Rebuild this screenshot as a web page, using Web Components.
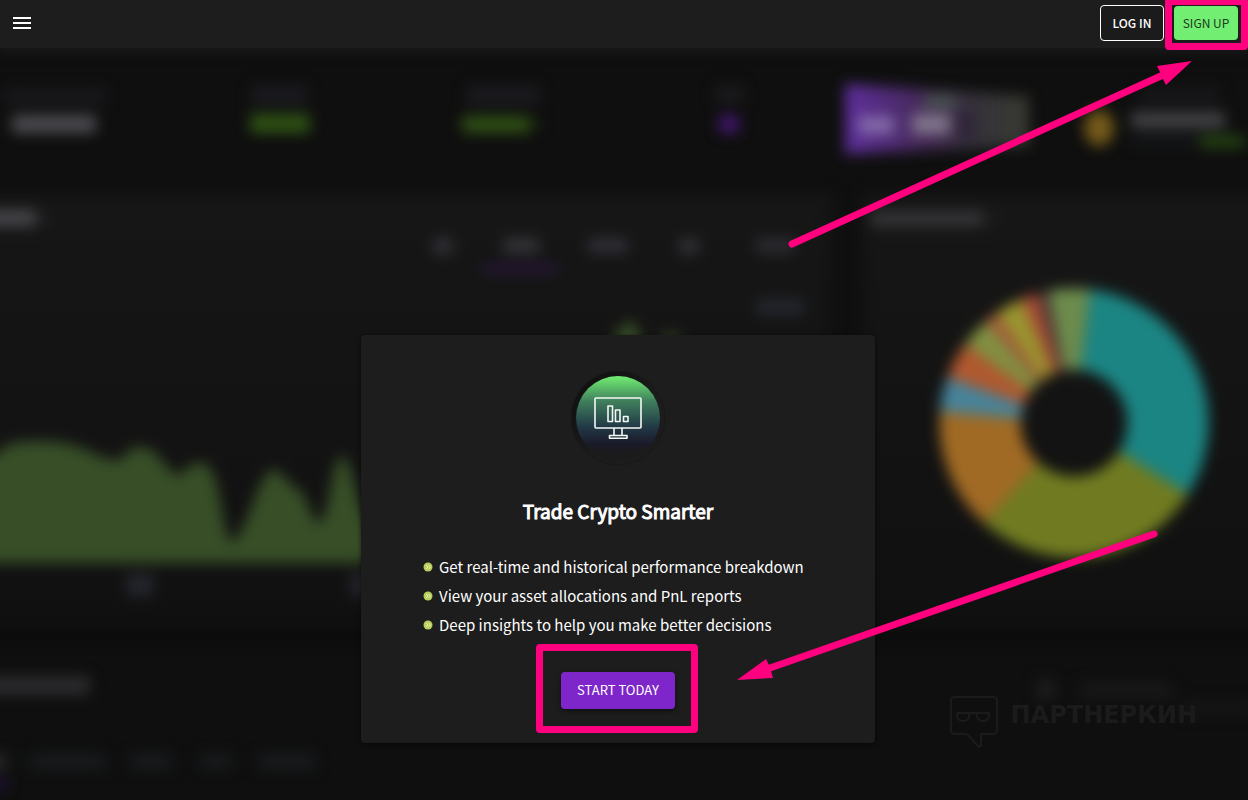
<!DOCTYPE html>
<html lang="en">
<head>
<meta charset="utf-8">
<meta name="viewport" content="width=device-width, initial-scale=1">
<title>Trade Crypto Smarter</title>
<style>
  body {
    margin: 0;
    background: #0f0f0f;
    color: #fff;
    font-family: "Noto Sans CJK SC", "Open Sans", sans-serif;
  }
</style>
</head>
<body>
<crypto-page>
  <app-header slot="header">
    <app-button variant="outline">LOG IN</app-button>
    <highlight-frame class="tight"><app-button variant="green">SIGN UP</app-button></highlight-frame>
  </app-header>
  <promo-card heading="Trade Crypto Smarter">
    <promo-item>Get real-time and historical performance breakdown</promo-item>
    <promo-item>View your asset allocations and PnL reports</promo-item>
    <promo-item>Deep insights to help you make better decisions</promo-item>
    <highlight-frame slot="action"><app-button variant="purple">START TODAY</app-button></highlight-frame>
  </promo-card>
</crypto-page>

<script>
// Page shell: blurred dashboard behind, header, content, annotations on top
class CryptoPage extends HTMLElement {
  constructor() {
    super();
    this.attachShadow({ mode: 'open' });
  }

  connectedCallback() {
    this.shadowRoot.innerHTML = `
      <style>
        :host {
          display: flex;
          flex-direction: column;
          position: relative;
          min-height: 100vh;
          overflow: hidden;
        }
        main {
          flex: 1;
          display: flex;
          justify-content: center;
          align-items: flex-start;
          padding: 287px 12px 57px 0;
          position: relative;
        }
      </style>
      <dashboard-backdrop></dashboard-backdrop>
      <slot name="header"></slot>
      <main><slot></slot></main>
      <site-watermark></site-watermark>
      <arrow-layer></arrow-layer>
    `;
  }
}

// Header
class AppHeader extends HTMLElement {
  constructor() {
    super();
    this.attachShadow({ mode: 'open' });
  }

  connectedCallback() {
    this.shadowRoot.innerHTML = `
      <style>
        :host {
          display: block;
          position: relative;
          z-index: 1;
        }
        header {
          display: flex;
          align-items: center;
          justify-content: space-between;
          height: 48px;
          padding: 0 10px;
          box-sizing: border-box;
          background: #1d1d1d;
          box-shadow: 0 4px 10px #1b1b1b;
        }
        .menu {
          display: flex;
          padding: 0 0 2px;
          border: 0;
          background: none;
        }
        nav {
          display: flex;
          align-items: center;
          gap: 10px;
          padding-bottom: 2px;
        }
      </style>
      <header>
        <button class="menu" aria-label="Menu">
          <svg width="24" height="24" viewBox="0 0 24 24" fill="#fff"><path d="M3 18h18v-2H3v2zm0-5h18v-2H3v2zm0-7v2h18V6H3z"/></svg>
        </button>
        <nav><slot></slot></nav>
      </header>
    `;
  }
}

// Button
class AppButton extends HTMLElement {
  constructor() {
    super();
    this.attachShadow({ mode: 'open' });
  }

  connectedCallback() {
    const variant = this.getAttribute('variant');
    this.shadowRoot.innerHTML = `
      <style>
        :host {
          display: block;
        }
        button {
          display: block;
          min-width: 64px;
          padding: 8px;
          border: 0;
          border-radius: 4px;
          font: 12px/18px "Noto Sans CJK SC", "Open Sans", sans-serif;
          white-space: nowrap;
          cursor: pointer;
        }
        .outline {
          border: 1px solid #fff;
          background: #1b1b1b;
          color: #fff;
          font-weight: 500;
        }
        .green {
          background: #72ef72;
          color: #1d3a1d;
        }
        .purple {
          min-width: 114px;
          padding: 9px 16px 10px;
          background: #7e26c9;
          color: #fff;
          font-size: 13px;
          box-shadow: 0 2px 5px rgba(0, 0, 0, .5);
        }
      </style>
      <button class="${variant}"><slot></slot></button>
    `;
  }
}

// Pink frame around whatever is slotted in
class HighlightFrame extends HTMLElement {
  constructor() {
    super();
    this.attachShadow({ mode: 'open' });
  }

  connectedCallback() {
    this.shadowRoot.innerHTML = `
      <style>
        :host {
          display: block;
          position: relative;
        }
        :host::after {
          content: "";
          position: absolute;
          inset: -28px -23px -24px -25px;
          border: 7px solid #ff007f;
          border-radius: 4px;
          pointer-events: none;
        }
        :host(.tight)::after {
          inset: -8px -10px -10px -9px;
        }
      </style>
      <slot></slot>
    `;
  }
}

// Promo card
class PromoCard extends HTMLElement {
  constructor() {
    super();
    this.attachShadow({ mode: 'open' });
  }

  connectedCallback() {
    this.shadowRoot.innerHTML = `
      <style>
        :host {
          display: flex;
          flex-direction: column;
          align-items: center;
          width: 514px;
          max-width: 100%;
          padding: 35px 62px 34px;
          box-sizing: border-box;
          border-radius: 4px;
          background: #1d1d1d;
          box-shadow: 0 1px 5px rgba(0, 0, 0, .6);
        }
        h2 {
          margin: 30px 0 26px;
          font-size: 19px;
          line-height: 30px;
          font-weight: 400;
          -webkit-text-stroke: 1px #fff;
        }
        ul {
          align-self: stretch;
          margin: 0 0 33px;
          padding: 0;
          list-style: none;
        }
      </style>
      <svg width="96" height="96" viewBox="0 0 96 96" fill="none">
        <defs>
          <linearGradient id="disc" x1="0" y1="0" x2="0" y2="1">
            <stop offset="0" stop-color="#72ef72"/>
            <stop offset=".3" stop-color="#3f7f5c"/>
            <stop offset=".6" stop-color="#223a47"/>
            <stop offset=".8" stop-color="#1b1b2b"/>
            <stop offset=".9" stop-color="#1b1b1d"/>
          </linearGradient>
          <linearGradient id="ring" x1="0" y1="0" x2="1" y2="1">
            <stop offset=".1" stop-color="#101010"/>
            <stop offset=".6" stop-color="#1c1c1c"/>
          </linearGradient>
        </defs>
        <circle cx="48" cy="48" r="47" fill="url(#ring)" stroke="#181818"/>
        <circle cx="48" cy="48" r="42" fill="url(#disc)"/>
        <g stroke="#f4f8f5" stroke-width="1.6" stroke-linejoin="round">
          <rect x="25" y="28" width="46" height="30" rx="1"/>
          <path d="M38 36h4.500v15.500h-4.500zM45.500 40h4.500v11.500h-4.500zM53.500 46.500h4.500v5h-4.500zM44 58v7.500M52 58v7.500M39.500 65.500h17.500v2.800h-17.500z"/>
        </g>
      </svg>
      <h2>${this.getAttribute('heading')}</h2>
      <ul><slot></slot></ul>
      <slot name="action"></slot>
    `;
  }
}

// One row of the card's list
class PromoItem extends HTMLElement {
  constructor() {
    super();
    this.attachShadow({ mode: 'open' });
  }

  connectedCallback() {
    this.setAttribute('role', 'listitem');
    this.shadowRoot.innerHTML = `
      <style>
        :host {
          display: flex;
          align-items: center;
          gap: 6px;
          font-size: 15px;
          line-height: 29px;
        }
        svg {
          flex: none;
        }
      </style>
      <svg width="10" height="10" viewBox="0 0 10 10" fill="none">
        <circle cx="5" cy="5" r="4.500" fill="#b8cf5c"/>
        <path d="M3 3l2 2-2 2M5.500 3l2 2-2 2" stroke="#f3f9cf" stroke-width=".8"/>
      </svg>
      <span><slot></slot></span>
    `;
  }
}

// Blurred dashboard drawing
class DashboardBackdrop extends HTMLElement {
  constructor() {
    super();
    this.attachShadow({ mode: 'open' });
  }

  connectedCallback() {
    // x, y, width, height, colour of each blurred label
    const labels = [
      [4, 88, 102, 16, '#19191d'], [12, 115, 84, 18, '#4c4b50'],
      [250, 86, 58, 18, '#1b1b20'], [250, 114, 60, 19, '#2f5214'],
      [466, 86, 74, 18, '#1b1b20'], [462, 116, 68, 17, '#304f15'], [532, 120, 8, 8, '#1d3012'],
      [714, 86, 30, 16, '#1b1b1e'], [719, 115, 20, 18, '#42166c'],
      [1140, 88, 80, 14, '#18181c'], [1131, 112, 94, 16, '#434347'],
      [1132, 135, 70, 10, '#15171a'], [1200, 136, 44, 11, '#264a10'],
      [-20, 210, 56, 16, '#47474c'], [40, 214, 9, 8, '#242429'],
      [870, 211, 114, 15, '#353538'], [990, 214, 10, 8, '#1f1f22'],
      [433, 238, 20, 16, '#313137'], [503, 238, 36, 15, '#343439'],
      [588, 238, 40, 15, '#2f2f37'], [679, 238, 20, 16, '#303035'],
      [756, 238, 38, 15, '#2c2c32'], [482, 265, 76, 7, '#2c1440'],
      [756, 299, 48, 16, '#23262d'],
      [126, 574, 28, 22, '#24252c'], [350, 574, 28, 22, '#24252c'],
      [-20, 676, 110, 19, '#2b2b2e'],
      [-20, 754, 27, 15, '#29292c'], [-20, 780, 28, 8, '#271246'],
      [30, 754, 76, 15, '#181b1d'], [130, 754, 42, 15, '#181b1d'],
      [200, 754, 32, 15, '#181b1d'], [258, 754, 58, 15, '#181b1d'],
      [1036, 680, 20, 19, '#1d1d1f'], [1080, 682, 92, 17, '#181819'], [1180, 701, 80, 14, '#161616']
    ];

    // start and end angle, clockwise from the top
    const slices = [
      [7, 122, '#1b8583'], [122, 222, '#707b21'], [222, 275, '#a06a24'],
      [275, 290, '#47839a'], [290, 306, '#b0592f'], [306, 319, '#819042'],
      [319, 325, '#a65c3b'], [325, 337, '#9a962f'], [337, 344, '#a94b35'],
      [344, 349, '#4c3634'], [349, 367, '#6d8b4c']
    ];

    this.shadowRoot.innerHTML = `
      <style>
        :host {
          display: block;
          position: absolute;
          inset: 0;
        }
        svg {
          display: block;
          width: 100%;
          height: 100%;
        }
      </style>
      <svg viewBox="0 0 1248 800" preserveAspectRatio="xMidYMin slice" fill="none" aria-hidden="true">
        <defs>
          <filter id="soft" x="-10%" y="-10%" width="120%" height="120%" color-interpolation-filters="sRGB">
            <feGaussianBlur stdDeviation="7"/>
          </filter>
          <linearGradient id="panel" x1="0" y1="0" x2="0" y2="1">
            <stop offset="0" stop-color="#161616"/>
            <stop offset="1" stop-color="#101010"/>
          </linearGradient>
          <linearGradient id="banner">
            <stop offset="0" stop-color="#5e2e9c"/>
            <stop offset=".45" stop-color="#442955"/>
            <stop offset=".7" stop-color="#35323a"/>
            <stop offset="1" stop-color="#383a31"/>
          </linearGradient>
        </defs>
        <rect width="1248" height="800" fill="#0f0f0f"/>
        <g filter="url(#soft)">
          <rect x="-40" y="193" width="872" height="433" fill="url(#panel)"/>
          <rect x="862" y="193" width="430" height="433" fill="url(#panel)"/>
          <rect x="-40" y="630" width="1330" height="10" fill="#0b0b0b"/>
          <path d="M845 84l184 12v50l-184 8z" fill="url(#banner)"/>
          <rect x="858" y="116" width="36" height="18" fill="#8269a8"/>
          <rect x="912" y="114" width="38" height="20" fill="#81758d"/>
          <rect x="924" y="95" width="32" height="12" fill="#47554f"/>
          <rect x="958" y="112" width="16" height="26" fill="#2e2338"/>
          <ellipse cx="1099" cy="128" rx="15" ry="18" fill="#745a1a"/>
          ${labels.map(([x, y, w, h, fill]) => `<rect x="${x}" y="${y}" width="${w}" height="${h}" rx="3" fill="${fill}"/>`).join('')}
          <path d="M-30 470C-10 462 5 442 20 442C50 440 70 442 90 452C105 458 115 463 122 459C132 442 148 445 158 456C168 468 176 478 182 474C192 460 205 458 212 472C222 488 222 535 232 542C246 536 258 472 274 469C284 473 288 486 300 490C308 498 312 526 321 522C330 510 332 457 342 456C352 459 356 500 366 520C400 560 500 500 560 420C590 380 620 322 630 321C645 326 640 375 655 362C660 334 672 322 682 345C700 400 760 440 800 480V563H-30z" fill="#374e27"/>
          ${slices.map(([from, to, stroke]) => `
            <circle cx="1074" cy="423" r="94" stroke="${stroke}" stroke-width="81" pathLength="360"
              stroke-dasharray="${to - from} 360" transform="rotate(${from - 90} 1074 423)"/>
          `).join('')}
        </g>
      </svg>
    `;
  }
}

// Watermark in the bottom right corner
class SiteWatermark extends HTMLElement {
  constructor() {
    super();
    this.attachShadow({ mode: 'open' });
  }

  connectedCallback() {
    this.shadowRoot.innerHTML = `
      <style>
        :host {
          display: flex;
          gap: 12px;
          position: absolute;
          right: 51px;
          bottom: 51px;
          color: #1b1b1b;
          font: 700 24px/40px "DejaVu Sans", sans-serif;
          pointer-events: none;
        }
      </style>
      <svg width="50" height="54" viewBox="0 0 50 54" fill="none" stroke="currentColor" stroke-width="2" stroke-linejoin="round">
        <path d="M6 2h38q4 0 4 4v29q0 4-4 4H32v11q-1 3-3 1L19 40q-1-1-3-1H6q-4 0-4-4V6q0-4 4-4z"/>
        <path d="M8 18h32v2q0 6-6 6t-6-6v-2h-8v2q0 6-6 6t-6-6z"/>
      </svg>
      <span>ПАРТНЕРКИН</span>
    `;
  }
}

// Pink arrows drawn over the page
class ArrowLayer extends HTMLElement {
  constructor() {
    super();
    this.attachShadow({ mode: 'open' });
  }

  connectedCallback() {
    this.shadowRoot.innerHTML = `
      <style>
        :host {
          display: block;
          position: absolute;
          inset: 0;
          z-index: 2;
          pointer-events: none;
        }
        svg {
          display: block;
          width: 100%;
          height: 100%;
        }
      </style>
      <svg viewBox="0 0 1248 800" preserveAspectRatio="xMidYMin slice" aria-hidden="true">
        <g stroke="#ff007f" stroke-width="7" stroke-linecap="round">
          <path d="M792 244L1163 75"/>
          <path d="M1154 534L770 668"/>
        </g>
        <path d="M1157 66L1192 61L1166 85L1163 79L1160 72zM737 680L766 659L769 665L771 671L773 678z" fill="#ff007f"/>
      </svg>
    `;
  }
}

customElements.define('crypto-page', CryptoPage);
customElements.define('app-header', AppHeader);
customElements.define('app-button', AppButton);
customElements.define('highlight-frame', HighlightFrame);
customElements.define('promo-card', PromoCard);
customElements.define('promo-item', PromoItem);
customElements.define('dashboard-backdrop', DashboardBackdrop);
customElements.define('site-watermark', SiteWatermark);
customElements.define('arrow-layer', ArrowLayer);
</script>
</body>
</html>
